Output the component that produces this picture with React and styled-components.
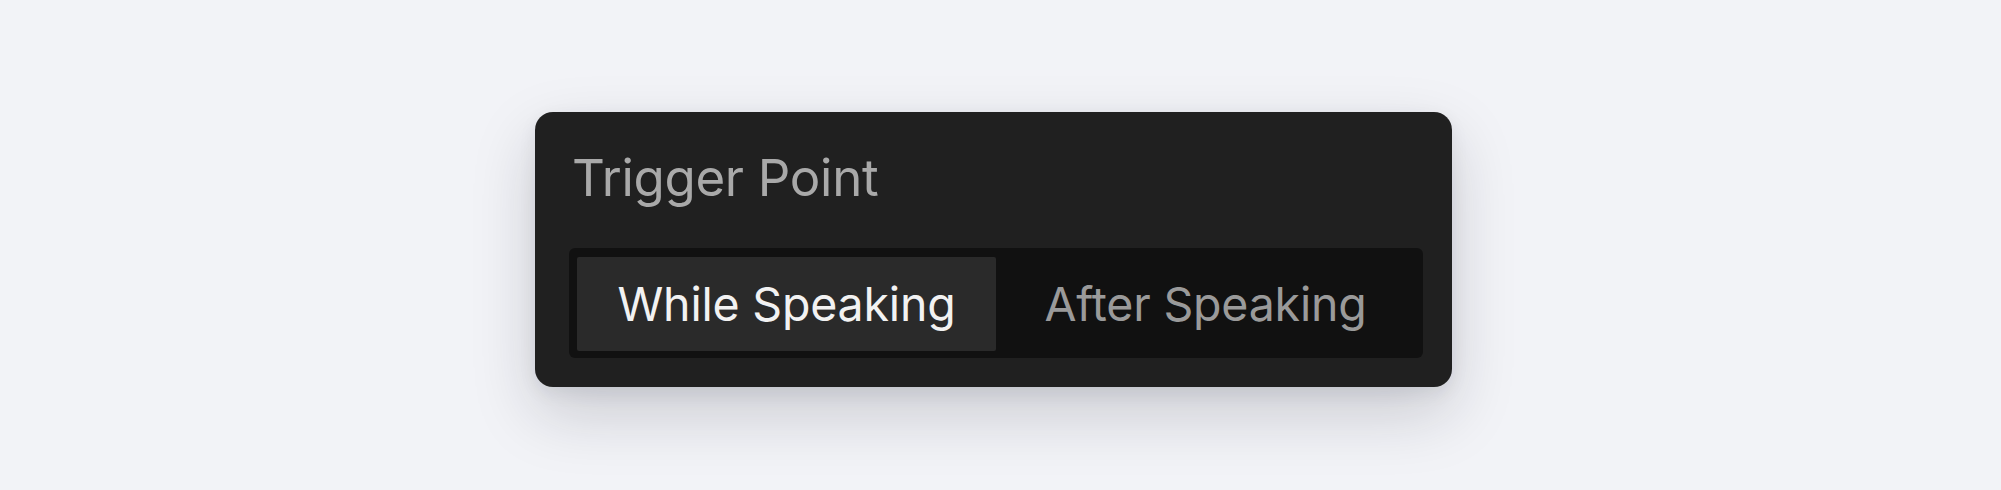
import React, { useState } from "react";
import styled, { createGlobalStyle } from "styled-components";

const Global = createGlobalStyle`
  html, body {
    margin: 0;
    padding: 0;
    background: #f2f3f7;
  }
  body {
    font-family: Inter, "Liberation Sans", sans-serif;
  }
`;

const Stage = styled.div`
  width: 2001px;
  height: 490px;
  box-sizing: border-box;
  display: flex;
  align-items: flex-start;
  justify-content: flex-start;
  padding: 112px 0 0 535px;
`;

const Card = styled.div`
  width: 917px;
  height: 275px;
  box-sizing: border-box;
  background: #202020;
  border-radius: 18px;
  padding: 0 29px 29px 34px;
  display: flex;
  flex-direction: column;
  justify-content: space-between;
  box-shadow: 0 26px 64px rgba(20, 24, 40, 0.18), 0 6px 18px rgba(20, 24, 40, 0.07);
`;

const Title = styled.div`
  font-size: 51px;
  line-height: 1;
  color: #a9a9a9;
  padding: 40px 0 0 3px;
  letter-spacing: -0.3px;
`;

const Segments = styled.div`
  display: flex;
  height: 110px;
  box-sizing: border-box;
  padding: 9px 8px 7px 8px;
  background: #111111;
  border-radius: 6px;
`;

const Segment = styled.button`
  flex: 1;
  border: none;
  margin: 0;
  padding: 0;
  border-radius: 2px;
  background: ${(p) => (p.$active ? "#2a2a2a" : "transparent")};
  color: ${(p) => (p.$active ? "#f2f2f2" : "#9a9a9a")};
  font-family: Inter, "Liberation Sans", sans-serif;
  font-size: 46.5px;
  letter-spacing: -0.2px;
  cursor: pointer;
  display: flex;
  align-items: center;
  justify-content: center;
`;

export default function App() {
  const [mode, setMode] = useState("while");
  return (
    <>
      <Global />
      <Stage>
        <Card>
          <Title>Trigger Point</Title>
          <Segments>
            <Segment $active={mode === "while"} onClick={() => setMode("while")}>
              While Speaking
            </Segment>
            <Segment $active={mode === "after"} onClick={() => setMode("after")}>
              After Speaking
            </Segment>
          </Segments>
        </Card>
      </Stage>
    </>
  );
}
